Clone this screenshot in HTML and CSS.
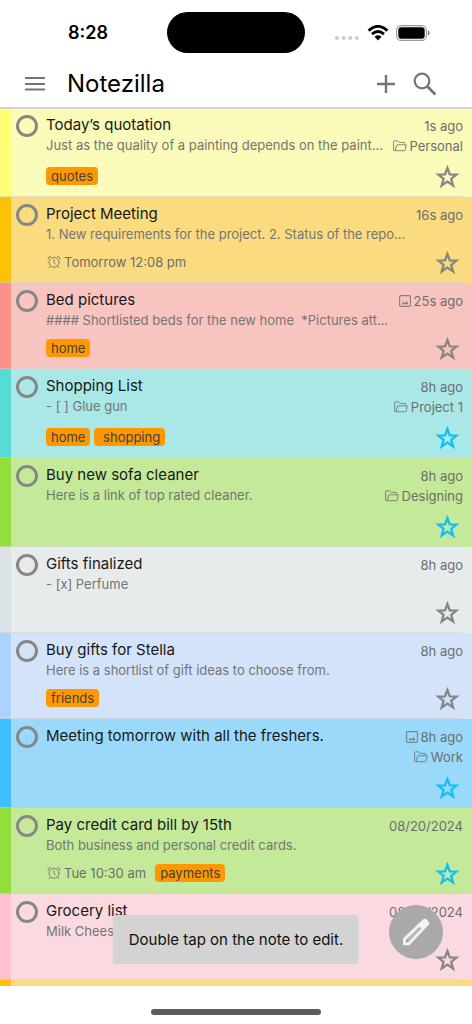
FILE: index.html
```html
<!DOCTYPE html>
<html lang="en">
<head>
<meta charset="utf-8">
<meta name="viewport" content="width=device-width, initial-scale=1">
<title>Notezilla</title>
<link rel="stylesheet" href="styles.css">
</head>
<body>
<svg class="symbols" aria-hidden="true">
  <symbol id="star" viewBox="0 0 26 26"><path d="M13.4 4 15.8 10.4 22.4 10.6 17.2 14.8 19.1 21.5 13.4 17.6 7.7 21.5 9.6 14.8 4.4 10.6 11 10.4Z" fill="none" stroke="currentColor" stroke-width="2.3"/></symbol>
  <symbol id="folder" viewBox="0 0 14 12"><path d="M2.6 10.7H1.3Q.6 10.7.6 10V1.6Q.6.9 1.3.9H4.6L6.2 2.4H11Q11.7 2.4 11.7 3.1V4.7M2.3 10.7 3.4 5.4Q3.6 4.8 4.2 4.8H13.2L12.1 10.1Q12 10.7 11.3 10.7H2.3" fill="none" stroke="currentColor" stroke-width="1"/></symbol>
  <symbol id="image" viewBox="0 0 12 12"><rect x=".6" y=".6" width="10.8" height="10.8" rx="1.2" fill="none" stroke="currentColor" stroke-width="1.1"/><path d="M2.6 9.2 4.4 6.7 5.8 8.2 7.6 6 9.5 9.2Z" fill="currentColor"/></symbol>
  <symbol id="alarm" viewBox="0 0 14 14"><g fill="none" stroke="currentColor" stroke-width="1" stroke-linecap="round"><circle cx="7" cy="7.3" r="5"/><path d="M7 4.3V7.5L8.8 9.3M3.4 11 2.2 12.6M10.6 11 11.8 12.6M.9 4.2Q.6 1.6 3.6 1.4M13.1 4.2Q13.4 1.6 10.4 1.4"/></g></symbol>
</svg>

<header class="header">
  <div class="status">
    <div class="clock">8:28</div>
    <div class="island"></div>
    <div class="indicators">
      <svg width="26" height="16" viewBox="0 0 26 16"><g fill="#ccc"><circle cx="3" cy="13" r="2.1"/><circle cx="9.6" cy="13" r="2.1"/><circle cx="16.2" cy="13" r="2.1"/><circle cx="22.8" cy="13" r="2.1"/></g></svg>
      <svg width="22" height="16" viewBox="0 0 22 16"><path d="M1.6 5.6Q11-2.9 20.4 5.6M5 9.1Q11 3.8 17 9.1" fill="none" stroke="#000" stroke-width="2.9"/><path d="M7.5 11.7Q11 8.8 14.5 11.7L11 15.4Z"/></svg>
      <svg width="34" height="16" viewBox="0 0 34 16"><rect x=".6" y=".6" width="29.8" height="14.8" rx="4.6" fill="none" stroke="#999" stroke-width="1.1"/><rect x="2.3" y="2.3" width="26.4" height="11.4" rx="3"/><path d="M31.8 5.3Q33.8 6 33.8 8 33.8 10 31.8 10.7Z" fill="#888"/></svg>
    </div>
  </div>
  <div class="toolbar">
    <button class="tool" aria-label="Menu"><svg width="22" height="22" viewBox="0 0 22 22"><path d="M1 5H21M1 11H21M1 16.6H21" stroke="currentColor" stroke-width="2"/></svg></button>
    <h1 class="app-title">Notezilla</h1>
    <button class="tool" aria-label="Add note"><svg width="22" height="22" viewBox="0 0 22 22"><path d="M2 11H20M11 2V20" stroke="currentColor" stroke-width="2.4"/></svg></button>
    <button class="tool" aria-label="Search"><svg width="24" height="24" viewBox="0 0 24 24"><circle cx="9" cy="9" r="7.3" fill="none" stroke="currentColor" stroke-width="2.2"/><path d="M14.2 14.2 22.4 22.4" stroke="currentColor" stroke-width="2.8"/></svg></button>
  </div>
</header>

<main class="notes">
  <article class="note yellow">
    <input class="check" type="checkbox" aria-label="Today’s quotation">
    <div class="body"><h2 class="title">Today’s quotation</h2><p class="preview">Just as the quality of a painting depends on the paint...</p>
      <div class="labels"><span class="tag">quotes</span></div></div>
    <div class="meta"><span class="info">1s ago</span><span class="info"><svg class="folder"><use href="#folder"/></svg>Personal</span>
      <button class="star" aria-label="Star"><svg><use href="#star"/></svg></button></div>
  </article>
  <article class="note orange">
    <input class="check" type="checkbox" aria-label="Project Meeting">
    <div class="body"><h2 class="title">Project Meeting</h2><p class="preview">1. New requirements for the project. 2. Status of the repo...</p>
      <div class="labels"><span class="reminder"><svg class="alarm"><use href="#alarm"/></svg>Tomorrow 12:08 pm</span></div></div>
    <div class="meta"><span class="info">16s ago</span>
      <button class="star" aria-label="Star"><svg><use href="#star"/></svg></button></div>
  </article>
  <article class="note red">
    <input class="check" type="checkbox" aria-label="Bed pictures">
    <div class="body"><h2 class="title">Bed pictures</h2><p class="preview">#### Shortlisted beds for the new home  *Pictures att...</p>
      <div class="labels"><span class="tag">home</span></div></div>
    <div class="meta"><span class="info"><svg class="image"><use href="#image"/></svg>25s ago</span>
      <button class="star" aria-label="Star"><svg><use href="#star"/></svg></button></div>
  </article>
  <article class="note teal">
    <input class="check" type="checkbox" aria-label="Shopping List">
    <div class="body"><h2 class="title">Shopping List</h2><p class="preview">- [ ] Glue gun</p>
      <div class="labels"><span class="tag">home</span><span class="tag"> shopping</span></div></div>
    <div class="meta"><span class="info">8h ago</span><span class="info"><svg class="folder"><use href="#folder"/></svg>Project 1</span>
      <button class="star starred" aria-label="Unstar"><svg><use href="#star"/></svg></button></div>
  </article>
  <article class="note green">
    <input class="check" type="checkbox" aria-label="Buy new sofa cleaner">
    <div class="body"><h2 class="title">Buy new sofa cleaner</h2><p class="preview">Here is a link of top rated cleaner.</p></div>
    <div class="meta"><span class="info">8h ago</span><span class="info"><svg class="folder"><use href="#folder"/></svg>Designing</span>
      <button class="star starred" aria-label="Unstar"><svg><use href="#star"/></svg></button></div>
  </article>
  <article class="note gray">
    <input class="check" type="checkbox" aria-label="Gifts finalized">
    <div class="body"><h2 class="title">Gifts finalized</h2><p class="preview">- [x] Perfume</p></div>
    <div class="meta"><span class="info">8h ago</span>
      <button class="star" aria-label="Star"><svg><use href="#star"/></svg></button></div>
  </article>
  <article class="note periwinkle">
    <input class="check" type="checkbox" aria-label="Buy gifts for Stella">
    <div class="body"><h2 class="title">Buy gifts for Stella</h2><p class="preview">Here is a shortlist of gift ideas to choose from.</p>
      <div class="labels"><span class="tag">friends</span></div></div>
    <div class="meta"><span class="info">8h ago</span>
      <button class="star" aria-label="Star"><svg><use href="#star"/></svg></button></div>
  </article>
  <article class="note blue">
    <input class="check" type="checkbox" aria-label="Meeting tomorrow with all the freshers.">
    <div class="body"><h2 class="title">Meeting tomorrow with all the freshers.</h2></div>
    <div class="meta"><span class="info"><svg class="image"><use href="#image"/></svg>8h ago</span><span class="info"><svg class="folder"><use href="#folder"/></svg>Work</span>
      <button class="star starred" aria-label="Unstar"><svg><use href="#star"/></svg></button></div>
  </article>
  <article class="note green">
    <input class="check" type="checkbox" aria-label="Pay credit card bill by 15th">
    <div class="body"><h2 class="title">Pay credit card bill by 15th</h2><p class="preview">Both business and personal credit cards.</p>
      <div class="labels"><span class="reminder"><svg class="alarm"><use href="#alarm"/></svg>Tue 10:30 am</span><span class="tag">payments</span></div></div>
    <div class="meta"><span class="info">08/20/2024</span>
      <button class="star starred" aria-label="Unstar"><svg><use href="#star"/></svg></button></div>
  </article>
  <article class="note pink">
    <input class="check" type="checkbox" aria-label="Grocery list">
    <div class="body"><h2 class="title">Grocery list</h2><p class="preview">Milk Cheese</p></div>
    <div class="meta"><span class="info">08/20/2024</span>
      <button class="star" aria-label="Star"><svg><use href="#star"/></svg></button></div>
  </article>
  <article class="note orange"></article>
</main>

<footer class="home"><div class="home-bar"></div></footer>
<div class="toast" role="status">Double tap on the note to edit.</div>
<button class="compose" aria-label="New note"><svg width="28" height="28" viewBox="0 0 28 28"><path fill="#f4f4f4" d="M1 27.2V20.6L20.6 1.7Q22.8-.1 25 1.9L26.2 3.1Q28 5.2 26.2 7.3L7.4 27.2Z"/><path d="M3.6 24.6 4 21.8 17.6 8.8 19.4 10.6 6.3 24.2Z" fill="#a9a9a9"/><path d="M6.4 21.8 17.4 10.9" stroke="#f4f4f4" stroke-width="0.6"/></svg></button>
</body>
</html>
```
FILE: styles.css
```css
* { box-sizing: border-box; }

body {
  margin: 0;
  height: 100vh;
  display: flex;
  flex-direction: column;
  position: relative;
  background: #fff;
  color: #181818;
  font-family: Inter, "Noto Sans", sans-serif;
}

button { border: 0; padding: 0; background: none; color: inherit; font: inherit; }
svg { display: block; flex: none; }
h1, h2, p { margin: 0; font-weight: 400; }
.symbols { display: none; }

.header {
  flex: none;
  position: relative;
  z-index: 1;
  margin-bottom: -1px;
  border-bottom: 2px solid #d3d3d3;
}

.status {
  display: grid;
  grid-template-columns: 1fr 138px 1fr;
  align-items: center;
  padding-top: 12px;
}
.clock {
  padding-left: 68px;
  font-size: 18px;
  line-height: 24px;
  font-weight: 600;
  color: #000;
}
.island { height: 41px; border-radius: 21px; background: #000; }
.indicators { display: flex; gap: 7px; padding-left: 29px; }

.toolbar {
  display: flex;
  align-items: center;
  gap: 16px;
  height: 54px;
  padding: 8px 35px 0 24px;
}
.tool { color: #757575; }
.app-title {
  flex: 1;
  padding-left: 5px;
  font-size: 24px;
  line-height: 32px;
  color: #000;
}

.notes { flex: 1; min-height: 0; overflow: hidden; }

.note {
  --bar: #ffc107;
  --fill: #fadb80;
  position: relative;
  display: flex;
  gap: 8px;
  min-height: 86px;
  padding: 7px 9px 7px 16px;
  background: linear-gradient(to right, var(--bar) 11px, var(--fill) 11px);
}
.note::after {
  content: "";
  position: absolute;
  inset: auto 9px 0 0;
  height: 1px;
  background: rgba(208, 208, 208, 0.6);
}
.yellow { --bar: #ffff76; --fill: #fafab9; }
.orange { --bar: #ffc107; --fill: #fadb80; }
.red { --bar: #fb918b; --fill: #f8c4c0; }
.teal { --bar: #58dad5; --fill: #a9e8e6; }
.green { --bar: #92df3b; --fill: #c4e999; }
.gray { --bar: #dbe3e7; --fill: #e7ebec; }
.periwinkle { --bar: #acd2ff; --fill: #d2e3fa; }
.blue { --bar: #40bdff; --fill: #9bd9fb; }
.pink { --bar: #ffc0cf; --fill: #fadae0; }

.check {
  appearance: none;
  flex: none;
  width: 22px;
  height: 22px;
  margin: 0;
  border: 3px solid #868686;
  border-radius: 50%;
}

.body {
  flex: 1;
  min-width: 0;
  display: flex;
  flex-direction: column;
}
.title {
  font-size: 15px;
  line-height: 20px;
  white-space: nowrap;
}
.preview {
  font-size: 13px;
  line-height: 20px;
  color: #757575;
  white-space: pre;
}
.labels {
  display: flex;
  align-items: center;
  gap: 4px;
  margin: auto 0 5px;
}
.tag {
  padding: 0 5px;
  border-radius: 4px;
  background: #ff9800;
  color: #424242;
  font-size: 13px;
  line-height: 18px;
  white-space: pre;
}
.reminder {
  display: flex;
  align-items: center;
  gap: 3px;
  margin-right: 5px;
  padding-left: 1px;
  font-size: 13px;
  line-height: 18px;
  color: #6e6e6e;
}

.meta {
  flex: none;
  display: flex;
  flex-direction: column;
  align-items: flex-end;
  padding-top: 1px;
}
.info {
  display: flex;
  align-items: center;
  gap: 3px;
  font-size: 13px;
  line-height: 20px;
  color: #6e6e6e;
}
.folder { width: 14px; height: 12px; }
.image { width: 12px; height: 12px; }
.alarm { width: 14px; height: 14px; }
.image, .folder, .alarm { opacity: 0.8; }
.star {
  width: 26px;
  height: 26px;
  margin: auto 3px 0 0;
  color: #868686;
}
.info + .info + .star { margin-top: 8px; }
.star svg { width: 26px; height: 26px; }
.starred { color: #0fbffc; }

.home {
  flex: none;
  display: flex;
  justify-content: center;
  height: 38px;
  padding-top: 23px;
}
.home-bar { width: 36%; height: 6px; border-radius: 3px; background: #5c5c5c; }

.toast {
  position: absolute;
  bottom: 60px;
  left: 50%;
  transform: translateX(-50%);
  padding: 15px 16px 14px;
  border-radius: 4px;
  background: #d3d3d3;
  color: #111;
  font-size: 15px;
  line-height: 20px;
  white-space: nowrap;
}
.compose {
  position: absolute;
  right: 29px;
  bottom: 65px;
  width: 54px;
  height: 54px;
  display: grid;
  place-items: center;
  border-radius: 50%;
  background: #a9a9a9;
  z-index: 1;
}
```
